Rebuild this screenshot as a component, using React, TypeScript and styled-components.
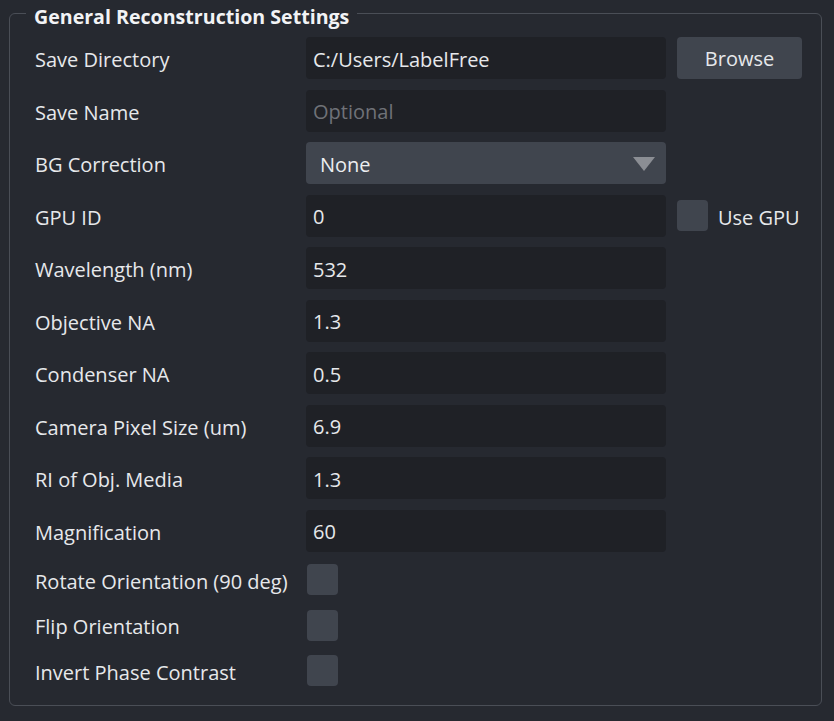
import React from "react";
import styled, { createGlobalStyle } from "styled-components";

const Global = createGlobalStyle`
  html, body { margin: 0; padding: 0; background: #262930; }
  body { font-family: "Open Sans", "Noto Sans", sans-serif; color: #e6e8eb; }
  * { box-sizing: border-box; }
`;

const Page = styled.div`
  width: 834px;
  height: 721px;
  padding: 0 0 0 9px;
  background: #262930;
`;

const Group = styled.fieldset`
  width: 813px;
  height: 706px;
  margin: 0;
  padding: 0;
  border: 1px solid #4a4e56;
  border-radius: 6px;
  min-width: 0;
`;

const Legend = styled.legend`
  margin-left: 16px;
  padding: 7px 8px 0;
  font-size: 19.6px;
  line-height: 20px;
  font-weight: 700;
  color: #f2f3f5;
`;

const Grid = styled.div`
  display: grid;
  grid-template-columns: 260px 360px 125px;
  column-gap: 11px;
  row-gap: 10.5px;
  padding: 10px 0 0 25px;
  align-items: center;
`;

const Label = styled.div`
  font-size: 20px;
  line-height: 26px;
  padding-top: 4px;
  color: #e6e8eb;
  white-space: nowrap;
`;

const Input = styled.input`
  height: 42px;
  width: 100%;
  border: none;
  outline: none;
  border-radius: 4px;
  background: #1f2126;
  color: #e6e8eb;
  font-family: inherit;
  font-size: 20px;
  padding: 2px 7px 0;
  &::placeholder { color: #6f7278; }
`;

const Button = styled.button`
  height: 42px;
  width: 100%;
  border: none;
  border-radius: 4px;
  background: #40454e;
  color: #e6e8eb;
  font-family: inherit;
  font-size: 20px;
  padding-top: 2px;
`;

const Combo = styled.div`
  height: 42px;
  border-radius: 4px;
  background: #40454e;
  display: flex;
  align-items: center;
  justify-content: space-between;
  padding: 2px 11px 0 14px;
  font-size: 20px;
  color: #eceef0;
`;

const Check = styled.span<{ $row?: boolean }>`
  display: block;
  width: 31px;
  height: 31px;
  border-radius: 4px;
  background: #40454e;
  margin-left: ${(p) => (p.$row ? "0" : "1px")};
`;

const CheckRow = styled.div`
  display: flex;
  align-items: center;
  gap: 10px;
  font-size: 20px;
  color: #e6e8eb;
`;

const CheckLabel = styled.span`
  padding-top: 3px;
`;

const CheckCell = styled.div`
  height: 35px;
  display: flex;
  align-items: center;
`;

const Empty = styled.div``;

type Field = { label: string; value?: string };

const fields: Field[] = [
  { label: "Wavelength (nm)", value: "532" },
  { label: "Objective NA", value: "1.3" },
  { label: "Condenser NA", value: "0.5" },
  { label: "Camera Pixel Size (um)", value: "6.9" },
  { label: "RI of Obj. Media", value: "1.3" },
  { label: "Magnification", value: "60" },
];

const checks = ["Rotate Orientation (90 deg)", "Flip Orientation", "Invert Phase Contrast"];

export default function App() {
  return (
    <>
      <Global />
      <Page>
        <Group>
          <Legend>General Reconstruction Settings</Legend>
          <Grid>
            <Label>Save Directory</Label>
            <Input defaultValue="C:/Users/LabelFree" />
            <Button>Browse</Button>

            <Label>Save Name</Label>
            <Input placeholder="Optional" />
            <Empty />

            <Label>BG Correction</Label>
            <Combo>
              <span>None</span>
              <svg width="22" height="14" viewBox="0 0 22 14">
                <polygon points="0,0 22,0 11,14" fill="#8b8e94" />
              </svg>
            </Combo>
            <Empty />

            <Label>GPU ID</Label>
            <Input defaultValue="0" />
            <CheckRow>
              <Check $row />
              <CheckLabel>Use GPU</CheckLabel>
            </CheckRow>

            {fields.map((f) => (
              <React.Fragment key={f.label}>
                <Label>{f.label}</Label>
                <Input defaultValue={f.value} />
                <Empty />
              </React.Fragment>
            ))}

            {checks.map((c) => (
              <React.Fragment key={c}>
                <Label>{c}</Label>
                <CheckCell>
                  <Check />
                </CheckCell>
                <Empty />
              </React.Fragment>
            ))}
          </Grid>
        </Group>
      </Page>
    </>
  );
}
